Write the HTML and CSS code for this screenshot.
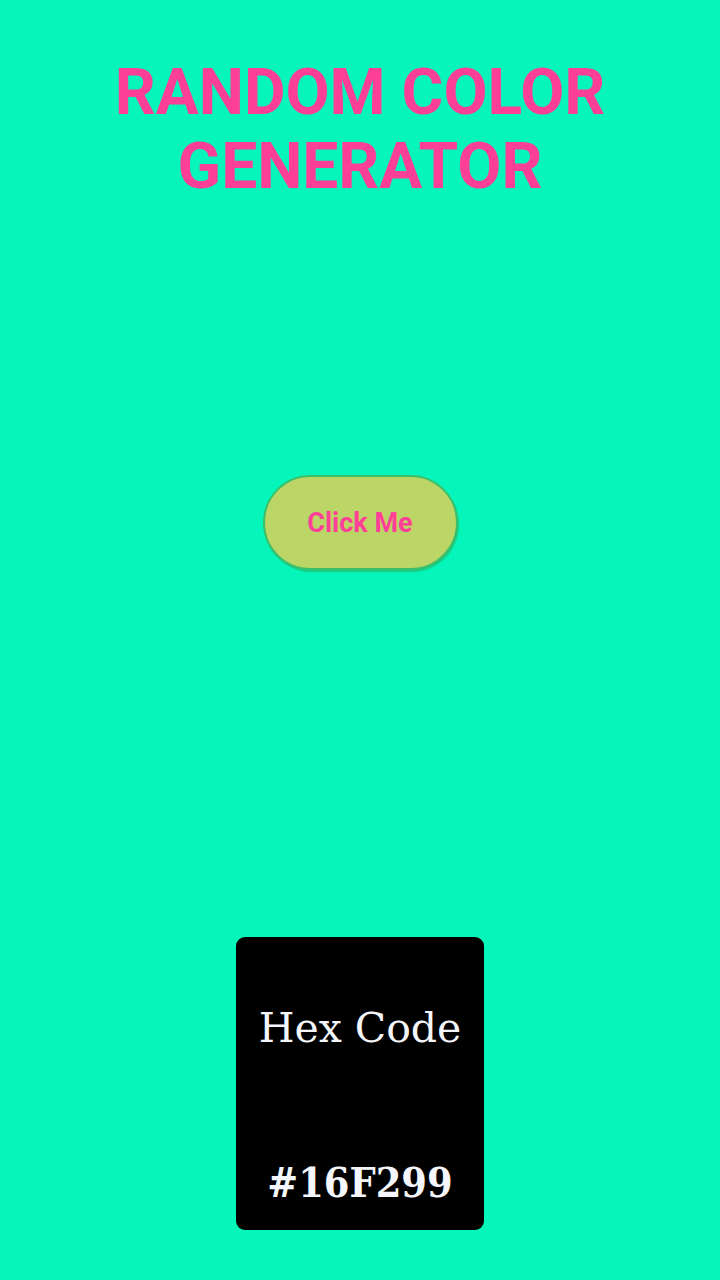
FILE: index.html
```html
<!DOCTYPE html>
<html lang="en">
<head>
<meta charset="utf-8">
<title>Random Color Generator</title>
<link rel="stylesheet" href="styles.css">
</head>
<body>
<main class="screen">
  <h1 class="title">RANDOM COLOR GENERATOR</h1>
  <button class="btn" type="button">Click Me</button>
  <section class="card">
    <p class="card-label">Hex Code</p>
    <p class="card-value">#16F299</p>
  </section>
</main>
</body>
</html>
```
FILE: styles.css
```css
html, body {
  margin: 0;
  padding: 0;
  background: #06f5ba;
}
.screen {
  width: 720px;
  height: 1280px;
  display: flex;
  flex-direction: column;
  align-items: center;
  box-sizing: border-box;
  padding-top: 56px;
}
.title {
  margin: 0;
  width: 520px;
  text-align: center;
  font-family: Roboto, "Liberation Sans", sans-serif;
  font-weight: 700;
  font-size: 64px;
  line-height: 74px;
  color: #fe3f97;
}
.btn {
  margin-top: 271px;
  width: 195px;
  height: 95px;
  border-radius: 48px;
  border: 2px solid #3dbf69;
  background: #bbd566;
  box-shadow: 1px 2px 1px rgba(40, 170, 90, 0.55);
  font-family: Roboto, "Liberation Sans", sans-serif;
  font-weight: 700;
  font-size: 27px;
  color: #fe3f97;
  padding: 0;
}
.card {
  margin-top: 367px;
  width: 248px;
  height: 293px;
  box-sizing: border-box;
  background: #000;
  border-radius: 9px;
  display: flex;
  flex-direction: column;
  align-items: center;
  padding-top: 71px;
  font-family: "DejaVu Serif", "Liberation Serif", serif;
  color: #f4f6fb;
}
.card-label {
  margin: 0;
  font-size: 41px;
  line-height: 1;
  white-space: nowrap;
}
.card-value {
  margin: 114px 0 0;
  font-size: 41px;
  font-weight: 700;
  font-stretch: condensed;
  line-height: 1;
  white-space: nowrap;
}
```
